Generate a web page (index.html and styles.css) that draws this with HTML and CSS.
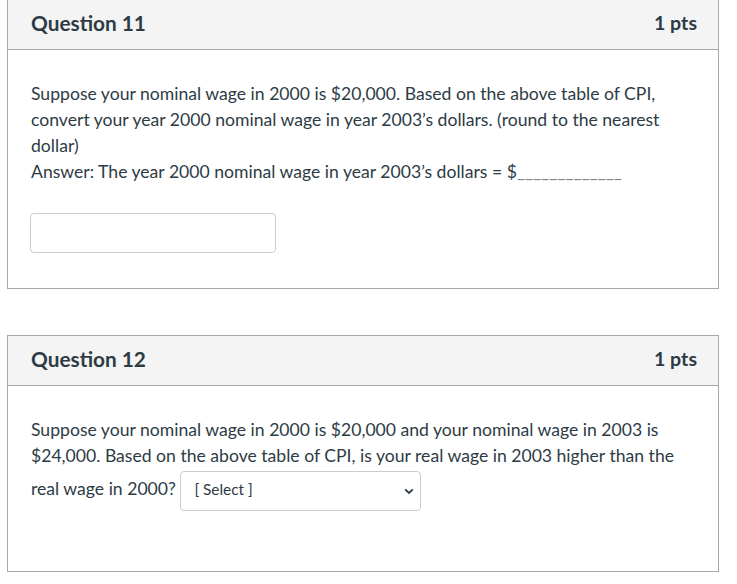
FILE: index.html
```html
<!DOCTYPE html>
<html>
<head>
<meta charset="utf-8">
<link rel="stylesheet" href="styles.css">
</head>
<body>
<div class="page">
  <section class="card">
    <header class="card-head">
      <h2 class="q-title">Question 11</h2>
      <span class="q-pts">1 pts</span>
    </header>
    <div class="card-body">
      <p class="q-text">Suppose your nominal wage in 2000 is $20,000. Based on the above table of CPI,<br>convert your year 2000 nominal wage in year 2003’s dollars. (round to the nearest<br>dollar)<br>Answer: The year 2000 nominal wage in year 2003’s dollars = $<span class="blank">_____________</span></p>
      <input class="answer" type="text" aria-label="Answer">
    </div>
  </section>

  <section class="card card-second">
    <header class="card-head">
      <h2 class="q-title">Question 12</h2>
      <span class="q-pts">1 pts</span>
    </header>
    <div class="card-body body-tall">
      <p class="q-text">Suppose your nominal wage in 2000 is $20,000 and your nominal wage in 2003 is<br>$24,000. Based on the above table of CPI, is your real wage in 2003 higher than the<br>real wage in 2000? <span class="select-wrap"><select class="select" aria-label="Select"><option>[ Select ]</option></select><svg class="chev" width="10" height="7" viewBox="0 0 10 7"><path d="M1.2 1.3 L5 5 L8.8 1.3" fill="none" stroke="#2d3b45" stroke-width="1.8"/></svg></span></p>
    </div>
  </section>
</div>
</body>
</html>
```
FILE: styles.css
```css
html, body {
  margin: 0;
  padding: 0;
  background: #ffffff;
}
body {
  font-family: Lato, "Open Sans", sans-serif;
  color: #2d3b45;
}
.page {
  margin-top: -1px;
  padding: 0 18px 0 7px;
}
.card {
  border: 1px solid #a8a8a8;
  width: 710px;
}
.card-second {
  margin-top: 46px;
}
.card-head {
  display: flex;
  justify-content: space-between;
  align-items: center;
  padding: 0 21px 4px 23px;
  background: #f4f4f4;
  border-bottom: 1px solid #a8a8a8;
  box-sizing: border-box;
  height: 50px;
}
.q-title {
  margin: 0;
  font-size: 20.8px;
  font-weight: 700;
}
.q-pts {
  font-size: 19.6px;
  font-weight: 700;
}
.card-body {
  padding: 31px 23px 35px 23px;
}
.body-tall {
  padding-bottom: 58px;
}
.q-text {
  margin: 0;
  font-size: 17.6px;
  line-height: 26px;
}
.blank {
  color: #7a848b;
}
.answer {
  display: block;
  margin-top: 28px;
  margin-left: -1px;
  width: 246px;
  height: 40px;
  box-sizing: border-box;
  border: 1px solid #c7cdd1;
  border-radius: 4px;
  background: #fff;
  font-family: inherit;
}
.select-wrap {
  position: relative;
  display: inline-block;
  vertical-align: middle;
  margin: 2px 0;
}
.select {
  appearance: none;
  -webkit-appearance: none;
  width: 241px;
  height: 40px;
  box-sizing: border-box;
  border: 1px solid #c7cdd1;
  border-radius: 4px;
  background: #fff;
  padding: 0 30px 4px 13px;
  font-family: Lato, sans-serif;
  font-size: 15.4px;
  color: #2d3b45;
  display: block;
}
.chev {
  position: absolute;
  right: 7px;
  top: 17px;
  pointer-events: none;
}
```
